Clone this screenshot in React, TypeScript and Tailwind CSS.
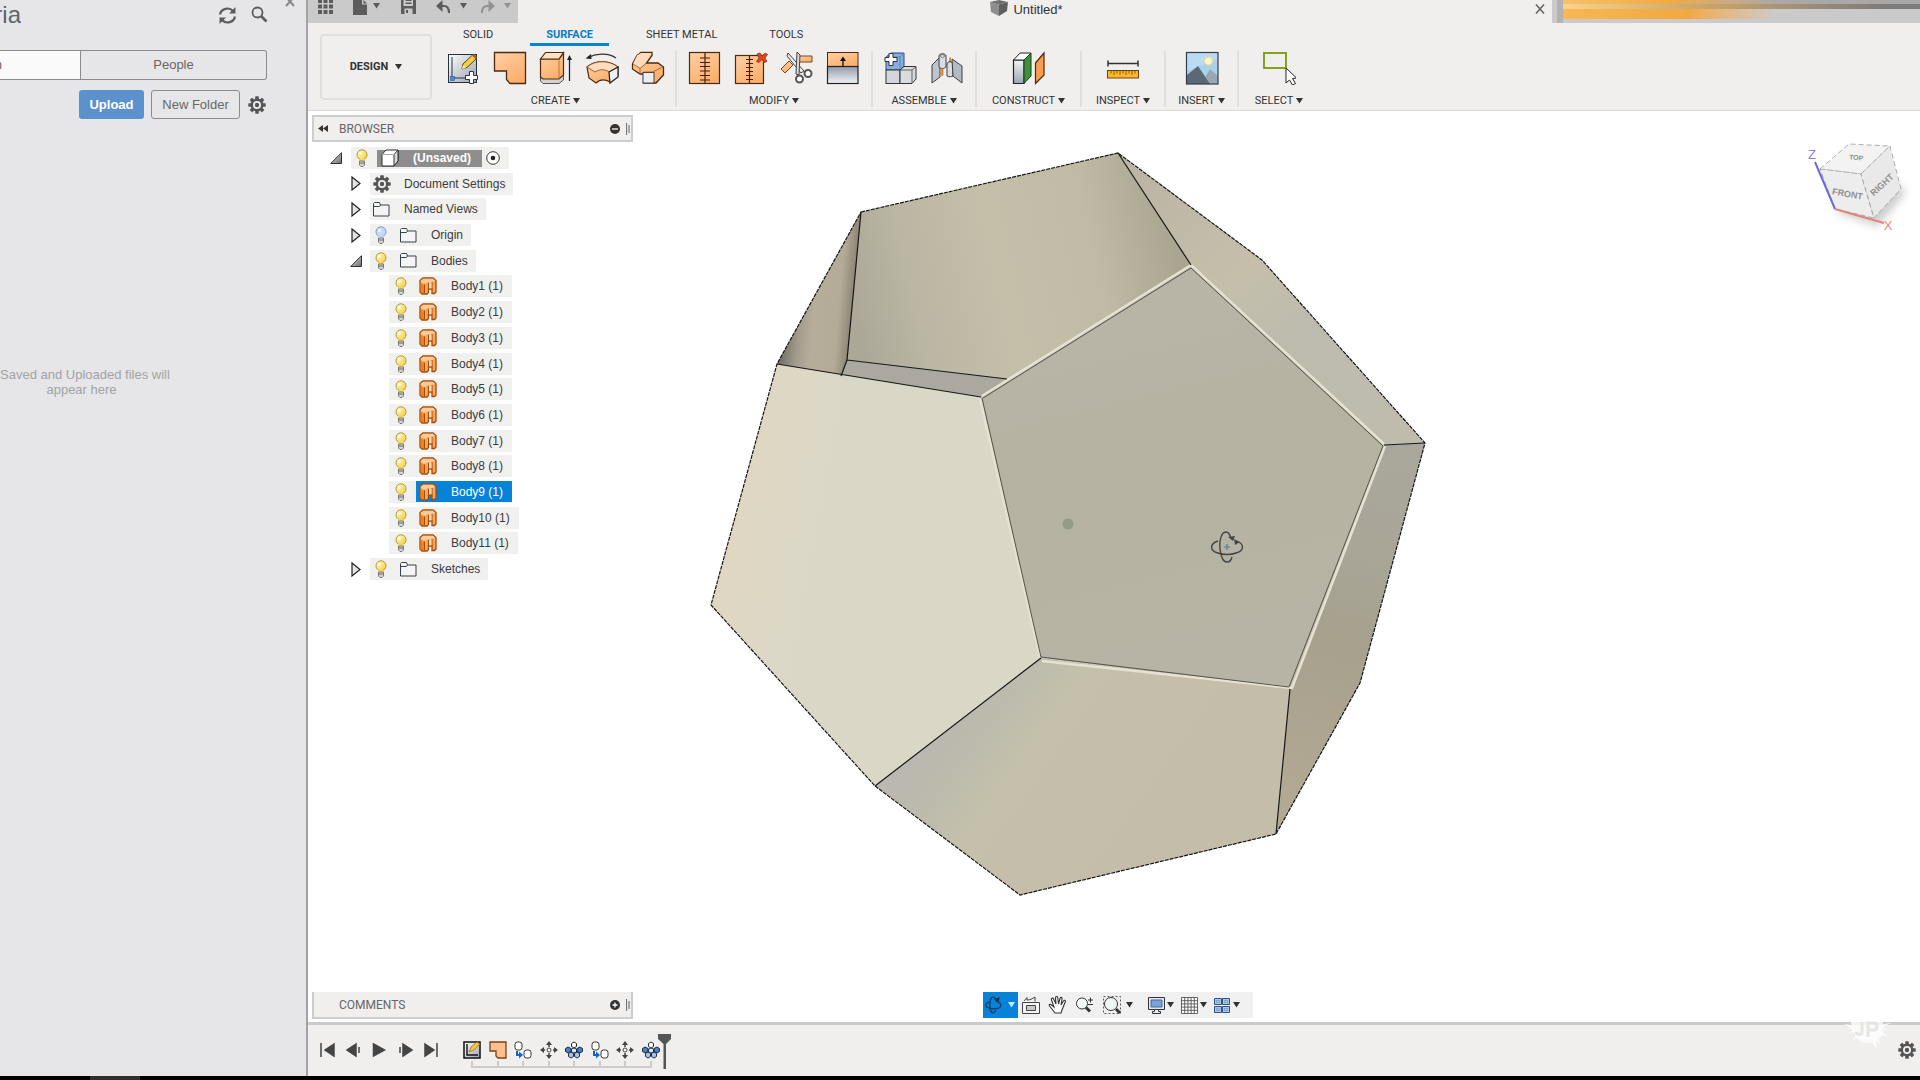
import React from "react";

type IconProps = { className?: string };

/* ---------- small shared pieces ---------- */

const Caret = ({ className = "text-[#333]" }: IconProps) => (
  <svg width="7" height="6" viewBox="0 0 7 6" className={"shrink-0 " + className} aria-hidden="true">
    <path d="M0 0h7L3.5 5.5z" fill="currentColor" />
  </svg>
);

const Gear = ({ className = "text-[#555]" }: IconProps) => (
  <svg width="18" height="18" viewBox="0 0 18 18" className={"shrink-0 " + className} aria-hidden="true">
    <g fill="currentColor">
      <rect x="7.2" y="0.3" width="3.6" height="17.4" rx="0.6" />
      <rect x="7.2" y="0.3" width="3.6" height="17.4" rx="0.6" transform="rotate(45 9 9)" />
      <rect x="7.2" y="0.3" width="3.6" height="17.4" rx="0.6" transform="rotate(90 9 9)" />
      <rect x="7.2" y="0.3" width="3.6" height="17.4" rx="0.6" transform="rotate(135 9 9)" />
      <circle cx="9" cy="9" r="6.4" />
    </g>
    <circle cx="9" cy="9" r="4" fill="#efefef" />
    <circle cx="9" cy="9" r="2.2" fill="currentColor" />
  </svg>
);

/* ---------- ribbon icons ---------- */

const svg32 = (children: React.ReactNode) => (
  <svg width="34" height="34" viewBox="0 0 34 34" className="-m-px" aria-hidden="true">
    {children}
  </svg>
);

const Defs = () => (
  <svg width="0" height="0" className="absolute" aria-hidden="true">
    <defs>
      <linearGradient id="or" x1="0" y1="0" x2="0.6" y2="1">
        <stop offset="0" stopColor="#ffd0a3" />
        <stop offset="1" stopColor="#fbaf6d" />
      </linearGradient>
      <linearGradient id="gr" x1="0" y1="0" x2="0" y2="1">
        <stop offset="0" stopColor="#f2f4f6" />
        <stop offset="1" stopColor="#9ba5b1" />
      </linearGradient>
      <linearGradient id="ex" x1="0" y1="0" x2="0" y2="1">
        <stop offset="0" stopColor="#8f9aa8" />
        <stop offset="1" stopColor="#f2f4f6" />
      </linearGradient>
      <linearGradient id="pg" x1="0" y1="0" x2="1" y2="1">
        <stop offset="0" stopColor="#fdfdfd" />
        <stop offset="1" stopColor="#97a3b3" />
      </linearGradient>
      <linearGradient id="bulb" x1="0" y1="0" x2="1" y2="1">
        <stop offset="0" stopColor="#fff9c8" />
        <stop offset="1" stopColor="#f5cf3c" />
      </linearGradient>
      <linearGradient id="tri" x1="0" y1="0" x2="1" y2="1">
        <stop offset="0" stopColor="#eee" />
        <stop offset="1" stopColor="#666" />
      </linearGradient>
    </defs>
  </svg>
);

const SketchIcon = () =>
  svg32(
    <>
      <rect x="1.5" y="3.5" width="28" height="28" fill="url(#pg)" stroke="#26313d" />
      <path d="M5 6v21h21" fill="none" stroke="#26313d" />
      <rect x="3.5" y="25.5" width="4" height="4" fill="#4a90d9" stroke="#235a94" strokeWidth="0.6" />
      <path d="M15 18l1-5L25.5 4l4 3.5-9.5 9z" fill="#f7cf45" stroke="#54420f" />
      <path d="M25 4.5l2-1.5 3 3-1.5 2z" fill="#b5581d" />
      <path d="M15 18l1-4 3 3z" fill="#fff1cf" />
      <path d="M22.500 20.500h4v4h4v4h-4v4h-4v-4h-4v-4h4z" fill="#fff" stroke="#333" />
    </>,
  );
const PatchIcon = () =>
  svg32(<path d="M1.500 1.500h31v31H17l-3.500-4V20h-12z" fill="url(#or)" stroke="#4b2a12" strokeWidth="1.3" />);
const ExtrudeIcon = () =>
  svg32(
    <>
      <path d="M1.500 26v4l2.500 2.500h16L24.500 29v-5z" fill="#cfd3d6" stroke="#555" />
      <path d="M1.500 8v18l2.500 2h16l4.500-4V2L20 8z" fill="url(#or)" stroke="#4b2a12" strokeWidth="1.2" />
      <path d="M1.500 8l5-6.500h18L20 8z" fill="#ffe0c2" stroke="#4b2a12" strokeWidth="1.2" />
      <path d="M20 8v20" stroke="#b2672c" strokeWidth="0.8" />
      <path d="M30.500 30V6" stroke="#222" strokeWidth="1.3" />
      <path d="M28 9l2.500-5L33 9z" fill="#222" />
    </>,
  );
const RevolveIcon = () =>
  svg32(
    <>
      <path d="M2 16c8-7 22-7 31 0v9l-8 6c-5-3-10-3-14 1l-7-5z" fill="url(#or)" stroke="#4b2a12" strokeWidth="1.2" />
      <path d="M2 16l8 5c5-3 10-3 14 0l9-5c-9-7-23-7-31 0z" fill="#ffdcbb" stroke="#7d4520" strokeWidth="0.8" />
      <path d="M24 21l9-5v10l-8 6z" fill="#edeff0" stroke="#222" strokeWidth="1.2" />
      <path d="M4 6C12 2 24 2 31 7" fill="none" stroke="#333" strokeWidth="1.3" />
      <path d="M0.500 7.500L6 3l.5 5z" fill="#222" />
    </>,
  );
const SweepIcon = () =>
  svg32(
    <>
      <path
        d="M6 4.500L10 1.500h11v3L15.500 12H27l5.500 4v8L25 32H12.500v-9H9l-7.500-5v-5z"
        fill="url(#or)"
        stroke="#4b2a12"
        strokeWidth="1.3"
      />
      <path d="M6 4.500L10 2h10.500L14 12l-5 5-7-4z" fill="#ffdcbb" />
      <path d="M2 13l7 4.500V23M9 17.500L15.500 12M12.500 21l9 0 10.500-5" fill="none" stroke="#a35f2c" strokeWidth="0.9" />
      <rect x="12" y="21.500" width="11" height="10.500" fill="#eceff1" stroke="#444" />
    </>,
  );
const StitchIcon = () =>
  svg32(
    <>
      <rect x="1.5" y="1.5" width="30" height="31" fill="url(#or)" stroke="#4b2a12" strokeWidth="1.2" />
      <path d="M17 2v30M12 7h10M12 11.500h10M12 15.500h10M12 20h10M12 24.500h10M12 29h10" stroke="#4b1d08" strokeWidth="1.2" />
    </>,
  );
const UnstitchIcon = () =>
  svg32(
    <>
      <rect x="1.5" y="4.5" width="28" height="28" fill="url(#or)" stroke="#4b2a12" strokeWidth="1.2" />
      <path
        d="M15.500 5v27M12 8.500h7M12 12.500h7M12 16.500h7M12 20.500h7M12 24.500h7M12 28.500h7"
        stroke="#4b1d08"
        strokeWidth="1.2"
      />
      <path d="M23 3l3-1 2 3 3-3 2.500 1.500L31 7l2 3.500-3 1-2-3-3 3-2.500-1L25 7z" fill="#e04321" stroke="#8e230c" strokeWidth="0.7" />
    </>,
  );
const TrimIcon = () =>
  svg32(
    <>
      <path d="M1 18l8-8 4 4-8 8z" fill="url(#or)" stroke="#7d4520" />
      <path d="M17 5h15v6H19z" fill="url(#or)" stroke="#7d4520" />
      <path d="M8 2l-1 3 14 17 3-2z" fill="#e9ebed" stroke="#444" />
      <path d="M17 1l3 3-1 20-3-1z" fill="#d7dadd" stroke="#444" />
      <circle cx="28" cy="22.500" r="3.5" fill="#fff" stroke="#555" strokeWidth="2" />
      <circle cx="19.500" cy="28" r="3.5" fill="#fff" stroke="#555" strokeWidth="2" />
    </>,
  );
const ExtendIcon = () =>
  svg32(
    <>
      <rect x="1.5" y="1.5" width="30.5" height="14" fill="url(#or)" stroke="#4b2a12" />
      <rect x="1.5" y="15.500" width="30.5" height="17" fill="url(#ex)" stroke="#222" strokeWidth="1.2" />
      <path d="M17 15V8" stroke="#111" strokeWidth="1.3" />
      <path d="M14 10l3-4.500 3 4.500z" fill="#111" />
    </>,
  );
const NewComponentIcon = () =>
  svg32(
    <>
      <path d="M2 6l5-4h13v13l-4 4H2z" fill="#86aee0" stroke="#2c4a73" />
      <path d="M2 6h14v13M16 6l4-4" fill="none" stroke="#5a83b8" />
      <rect x="2" y="19" width="14" height="13.5" fill="#d3d6da" stroke="#333" />
      <path d="M16 19l4-3.500h12V28l-4 4.500H16z" fill="#d9dbde" stroke="#333" />
      <path d="M16 19h12v13M28 19l4-3.500" fill="none" stroke="#555" strokeWidth="0.9" />
      <path d="M5 2.500h4v4h4v4H9v4H5v-4H1v-4h4z" fill="#fff" stroke="#333" />
    </>,
  );
const JointIcon = () =>
  svg32(
    <>
      <path d="M2 14l8-8v20l-8 6z" fill="#bfc4ca" stroke="#3a3f45" />
      <path d="M9 5c0-3 7-3 7 0v11c-2 2-5 2-7 0z" fill="#d9dce0" stroke="#3a3f45" />
      <ellipse cx="12.5" cy="5" rx="2" ry="1.3" fill="#fff" stroke="#3a3f45" strokeWidth="0.7" />
      <path d="M10.500 18h3v6l-1.500 1.500-1.500-1.500zM19 7l2-1v6h-2z" fill="#e88b3c" />
      <path d="M17 13c0-3 6-3 6 0v12c-2 1-4 1-6 0z" fill="#d9dce0" stroke="#3a3f45" />
      <path d="M22 8l10 7v17l-9-7z" fill="#b4bac1" stroke="#3a3f45" />
    </>,
  );
const ConstructIcon = () =>
  svg32(
    <>
      <path d="M1.500 9v23.500H12V9z" fill="url(#gr)" stroke="#222" strokeWidth="1.2" />
      <path d="M1.500 9L8 2h11l-7 7z" fill="#fafafa" stroke="#222" />
      <path d="M12 9l7-7v23l-7 7.500z" fill="#3f8f3b" stroke="#183f18" />
      <path d="M23.500 12L32 2v22l-8.500 8.500z" fill="#fb9d51" stroke="#51280b" strokeWidth="1.2" />
    </>,
  );
const InspectIcon = () =>
  svg32(
    <>
      <path d="M2 12.500h30M2 9.500v6M32 9.500v6" stroke="#333" strokeWidth="1.5" />
      <rect x="1.5" y="19.500" width="31" height="7.5" fill="#fdb92e" stroke="#6a4606" />
      <path
        d="M5 20v2.500M8 20v4M11 20v2.500M14 20v4M17 20v2.500M20 20v4M23 20v2.500M26 20v4M29 20v2.500"
        stroke="#6a4606"
        strokeWidth="0.8"
      />
    </>,
  );
const InsertIcon = () =>
  svg32(
    <>
      <rect x="1.5" y="1.5" width="31.5" height="31.5" fill="#a9d1ec" />
      <path d="M2 2h30v6L2 20z" fill="#c2e0f3" opacity="0.7" />
      <circle cx="23.5" cy="10" r="4" fill="#fdf6c9" stroke="#f0dc86" />
      <path d="M16 33l9-15 8 7v8z" fill="#9aa8b5" />
      <path d="M2 24l11-9 12 18H2z" fill="#5b6876" />
      <rect x="1.5" y="1.5" width="31.5" height="31.5" fill="none" stroke="#333c47" strokeWidth="1.2" />
    </>,
  );
const SelectIcon = () =>
  svg32(
    <>
      <rect x="2" y="2" width="22" height="15" fill="none" stroke="#86a11c" strokeWidth="2" />
      <path d="M24 17v15l3.500-3 3 5 3-1.500-3-5 4-.5z" fill="#fff" stroke="#222" />
    </>,
  );

type Group = { label: string; width: string; icons: { name: string; icon: React.ReactNode }[] };

const groups: Group[] = [
  {
    label: "CREATE",
    width: "w-[241px]",
    icons: [
      { name: "Create Sketch", icon: <SketchIcon /> },
      { name: "Patch", icon: <PatchIcon /> },
      { name: "Extrude", icon: <ExtrudeIcon /> },
      { name: "Revolve", icon: <RevolveIcon /> },
      { name: "Sweep", icon: <SweepIcon /> },
    ],
  },
  {
    label: "MODIFY",
    width: "w-[196px]",
    icons: [
      { name: "Stitch", icon: <StitchIcon /> },
      { name: "Unstitch", icon: <UnstitchIcon /> },
      { name: "Trim", icon: <TrimIcon /> },
      { name: "Extend", icon: <ExtendIcon /> },
    ],
  },
  {
    label: "ASSEMBLE",
    width: "w-[104px]",
    icons: [
      { name: "New Component", icon: <NewComponentIcon /> },
      { name: "Joint", icon: <JointIcon /> },
    ],
  },
  { label: "CONSTRUCT", width: "w-[105px]", icons: [{ name: "Construct", icon: <ConstructIcon /> }] },
  { label: "INSPECT", width: "w-[84px]", icons: [{ name: "Inspect", icon: <InspectIcon /> }] },
  { label: "INSERT", width: "w-[73px]", icons: [{ name: "Insert", icon: <InsertIcon /> }] },
  { label: "SELECT", width: "w-20", icons: [{ name: "Select", icon: <SelectIcon /> }] },
];

const tabs = ["SOLID", "SURFACE", "SHEET METAL", "TOOLS"];

/* ---------- data panel ---------- */

const DataPanel = () => (
  <aside className="flex w-[308px] shrink-0 flex-col overflow-hidden border-r-2 border-[#a3a3a5] bg-[#e6e6e8] text-[#666]">
    <header className="flex h-[30px] items-start">
      <div className="flex w-[21px] justify-end overflow-hidden">
        <h1 className="text-2xl leading-[30px] text-[#5f6468]">ria</h1>
      </div>
      <div className="ml-auto flex items-start">
        <button aria-label="Refresh" className="mt-[6px]">
          <svg width="19" height="19" viewBox="0 0 19 19" fill="none" stroke="#5c5c5c" strokeWidth="2.2">
            <path d="M2 8.500C3 2.500 11 .5 15 5M17 10.500c-1 6-9 8-13 3.500" />
            <path d="M17.500 1v6.500H11zM1.500 18v-6.500H8z" fill="#5c5c5c" stroke="none" />
          </svg>
        </button>
        <button aria-label="Search" className="mt-[6px] ml-[14px]">
          <svg width="17" height="17" viewBox="0 0 17 17" fill="none" stroke="#5c5c5c">
            <circle cx="6.5" cy="6.5" r="5" strokeWidth="1.8" />
            <path d="M10 10l5.500 5.500" strokeWidth="2.6" />
          </svg>
        </button>
        <button aria-label="Close panel" className="mr-[11px] ml-[17px]">
          <svg width="10" height="7" viewBox="0 0 10 7" stroke="#888" strokeWidth="2">
            <path d="M1-3l8 9M9-3L1 6" />
          </svg>
        </button>
      </div>
    </header>
    <div className="mt-5 mr-[39px] flex h-[30px] overflow-hidden rounded-r-[3px] border border-l-0 border-[#8b8b8b] text-[13px]">
      <button className="flex w-[81px] items-center border-r border-[#8b8b8b] bg-[#fafafa]">
        <span className="flex w-[2px] justify-end overflow-hidden">n</span>
      </button>
      <button className="flex-1">People</button>
    </div>
    <div className="mt-[10px] mr-10 flex items-center justify-end">
      <button className="h-[29px] w-[65px] rounded-[3px] bg-[#5b92cd] text-[13px] font-bold text-white">Upload</button>
      <button className="ml-[7px] h-[29px] w-[89px] rounded-[3px] border border-[#8b8b8b] text-[13px]">New Folder</button>
      <button aria-label="Settings" className="ml-2">
        <Gear />
      </button>
    </div>
    <p className="mt-[248px] mr-[143px] text-center text-[13px] leading-[15px] whitespace-nowrap text-[#a2a2a5]">
      Saved and Uploaded files will
      <br />
      appear here
    </p>
  </aside>
);

/* ---------- top bar and ribbon ---------- */

const TitleBar = () => (
  <div className="flex h-[23px]">
    <div className="flex w-[210px] shrink-0 items-start bg-[#cbcacb] pl-[10px] text-[#5c5c5c]">
      <button aria-label="Show data panel">
        <svg width="15" height="14" viewBox="0 0 15 14" fill="currentColor">
          <path d="M0 0h4v3H0zM5.500 0h4v3h-4zM11 0h4v3h-4zM0 4.500h4v4H0zM5.500 4.500h4v4h-4zM11 4.500h4v4h-4zM0 10h4v4H0zM5.500 10h4v4h-4zM11 10h4v4h-4z" />
        </svg>
      </button>
      <button aria-label="File" className="ml-5 flex gap-[5px]">
        <svg width="15" height="15" viewBox="0 0 15 15" fill="currentColor">
          <path d="M0 0h9v4.500h5V15H0zM10.500 0L14 3.500h-3.500z" />
        </svg>
        <Caret className="mt-[3px]" />
      </button>
      <button aria-label="Save" className="ml-[21px]">
        <svg width="15" height="14" viewBox="0 0 15 14" fill="currentColor">
          <path
            fillRule="evenodd"
            d="M0 0h2.500v6h9.500V0H15v14H0zM3.500 8.500V14h8V8.500zM4.500 0h6v1h-6zM4.500 2.500h6v1.500h-6zM5 10h2v3H5z"
          />
        </svg>
      </button>
      <button aria-label="Undo" className="ml-5 flex gap-[9px]">
        <svg width="15" height="14" viewBox="0 0 15 14">
          <path d="M3 6h5c4 0 5 3 5 7" fill="none" stroke="currentColor" strokeWidth="2.2" />
          <path d="M6.500 0v12L0 6z" fill="currentColor" />
        </svg>
        <Caret className="mt-[3px]" />
      </button>
      <button aria-label="Redo" className="ml-[13px] flex gap-[9px] text-[#919191]">
        <svg width="15" height="14" viewBox="0 0 15 14">
          <path d="M12 6H7c-4 0-5 3-5 7" fill="none" stroke="currentColor" strokeWidth="2" />
          <path d="M8.500 0v12L15 6z" fill="currentColor" />
        </svg>
        <Caret className="mt-[3px]" />
      </button>
    </div>
    <div className="flex flex-1 items-start pr-[7px]">
      <div className="flex flex-1 justify-center gap-[5px] text-[13px] leading-[19px] text-[#333]">
        <svg width="18" height="17" viewBox="0 0 18 17" aria-hidden="true">
          <path d="M0 2l9 2.500V16l-8-4z" fill="#8d8d8d" />
          <path d="M9 4.500L18 2l-1 9-8 5z" fill="#5f5f5f" />
          <path d="M0 2l9-2 9 2-9 2.500z" fill="#6f6f6f" />
        </svg>
        <span>Untitled*</span>
      </div>
      <button aria-label="Close document" className="mt-1">
        <svg width="10" height="10" viewBox="0 0 10 10" stroke="#666" strokeWidth="1.6">
          <path d="M1 0.500l8 9M9 0.500l-8 9" />
        </svg>
      </button>
    </div>
    <div className="flex w-[368px] shrink-0 items-start bg-[#cbcacb]">
      <div className="h-full w-[5px]" />
      <div className="h-full w-[6px] bg-[#b3b2b3]" />
      <div className="flex h-[19px] flex-1 flex-col">
        <div className="h-1 bg-linear-to-r from-[#f6c06a] via-[#f0aa3f] via-30% to-[#a9a8a7] to-60%" />
        <div className="h-[5px] bg-linear-to-r from-[#fad28c] via-[#c9a468] via-40% to-[#7c7c7c] to-90%" />
        <div className="h-[10px] bg-linear-to-r from-[#f7b753] via-[#f1a93f] via-35% to-[#cbcacb] to-60%" />
      </div>
    </div>
  </div>
);

const Ribbon = () => (
  <div className="flex h-[111px] shrink-0 flex-col border-b border-[#dad9d8] bg-[#f0efee]">
    <TitleBar />
    <div className="flex font-['Roboto','Liberation_Sans',sans-serif] text-[11px] text-[#333]">
      <button className="mt-[11px] ml-3 flex h-[66px] w-28 shrink-0 items-center justify-center gap-[7px] rounded border-2 border-[#e0dfde] font-bold">
        DESIGN
        <Caret />
      </button>
      <div className="ml-1 flex flex-col">
        <nav className="flex gap-[22px] pl-3" role="tablist">
          {tabs.map((t) => (
            <button
              key={t}
              role="tab"
              aria-selected={t === "SURFACE"}
              className={
                t === "SURFACE"
                  ? "h-[23px] border-b-3 border-[#0a84d0] px-4 pt-1 leading-4 font-bold text-[#0a7dc8]"
                  : "h-[23px] border-b-3 border-transparent px-[15px] pt-1 leading-4"
              }
            >
              {t}
            </button>
          ))}
        </nav>
        <div className="mt-[5px] flex">
          {groups.map((g) => (
            <section
              key={g.label}
              className={"flex h-14 flex-col items-center border-r-2 border-[#e0dfde] pt-px last:border-0 " + g.width}
            >
              <div className="flex gap-[14px]">
                {g.icons.map((i) => (
                  <button key={i.name} aria-label={i.name} className="size-8">
                    {i.icon}
                  </button>
                ))}
              </div>
              <button className="mt-[10px] flex items-center gap-[3px] leading-[14px]">
                {g.label}
                <Caret />
              </button>
            </section>
          ))}
        </div>
      </div>
    </div>
  </div>
);

/* ---------- browser tree ---------- */

const Bulb = ({ off = false }: { off?: boolean }) => (
  <svg width="12" height="18" viewBox="0 0 12 18" className="shrink-0" aria-hidden="true">
    <circle cx="6" cy="5.8" r="5" fill={off ? "#c5dafa" : "url(#bulb)"} stroke={off ? "#7f9cc9" : "#b9962b"} />
    <path d="M3.500 9.500h5v3h-5z" fill={off ? "#c5dafa" : "#f5d75a"} />
    <path d="M3.500 12h5v4l-1.500 1.500H5L3.500 16z" fill="#d4d4d4" stroke="#666" strokeWidth="0.8" />
    <path d="M3.500 14h5" stroke="#666" />
    <circle cx="4.5" cy="4.5" r="1.5" fill="#fff" opacity="0.8" />
  </svg>
);

const Folder = () => (
  <svg width="17" height="15" viewBox="0 0 17 15" className="shrink-0" fill="#f4f4f4" stroke="#39424a" aria-hidden="true">
    <path d="M.5 14V1.500L1.500.5h5L7.500 3H16v11z" />
    <path d="M.5 4.500h6L7.500 3" fill="none" />
  </svg>
);

const BodyIcon = () => (
  <svg width="18" height="18" viewBox="0 0 18 18" className="shrink-0" aria-hidden="true">
    <path
      d="M1 3.500L4 1h10l3 2.500V15l-1.500 1.500H13V12H9.500v3.500L8 17H3l-2-2z"
      fill="#f9a456"
      stroke="#a14e0a"
      strokeWidth="1.3"
    />
    <path d="M1.800 3.700L4.200 1.700h9.600l2.400 2L13 5H8.500L7 6.500H4L1.800 5z" fill="#ffcb9a" />
    <path d="M1.800 6L4 7.500h1.500v8.500H3.200L1.800 14.500z" fill="#f47f1c" />
    <path d="M5.500 7.500V16M9.500 6v6M13 5v7" stroke="#a14e0a" />
    <path d="M10 5.500h2.500v5.800H10z" fill="#ffd9b5" />
  </svg>
);

const CubeIcon = () => (
  <svg width="18" height="18" viewBox="0 0 18 18" className="shrink-0" stroke="#333" aria-hidden="true">
    <path d="M1 5.500l4-4.500h12v11l-4 5H1z" fill="#fff" />
    <path d="M13 5.500V17l4-5V1z" fill="#d8dadd" />
    <path d="M1 5.500h12" stroke="#aaa" />
  </svg>
);

const Twisty = ({ open, label }: { open: boolean; label: string }) => (
  <button aria-label={(open ? "Collapse " : "Expand ") + label} className="flex w-3 shrink-0 justify-center">
    {open ? (
      <svg width="12" height="12" viewBox="0 0 12 12">
        <path d="M11.500.7v10.800H.7z" fill="url(#tri)" stroke="#333" />
      </svg>
    ) : (
      <svg width="10" height="15" viewBox="0 0 10 15">
        <path d="M1 1l8 6.500L1 14z" fill="#e2e2e2" stroke="#222" strokeWidth="1.2" />
      </svg>
    )}
  </button>
);

type Branch = { label: string; open: boolean; icon: "gear" | "folder"; bulb?: "on" | "off" };

const BranchRow = ({ label, open, icon, bulb }: Branch) => (
  <li className="flex items-center pl-[38px]">
    <Twisty open={open} label={label} />
    <div className="ml-[8px] flex h-[22px] items-center bg-[#f0f0ef] pr-2">
      {bulb && (
        <span className="flex w-[27px] justify-center pr-[5px]">
          <Bulb off={bulb === "off"} />
        </span>
      )}
      <span className="flex w-[34px] items-center pl-[3px]">{icon === "gear" ? <Gear /> : <Folder />}</span>
      <span>{label}</span>
    </div>
  </li>
);

const BodyRow = ({ n }: { n: number }) => (
  <li className="flex items-center pl-[77px]">
    <div className="flex h-[22px] items-center bg-[#f0f0ef]">
      <span className="flex w-[27px] justify-center pr-1">
        <Bulb />
      </span>
      <span
        className={
          n === 9
            ? "flex h-[21px] items-center bg-[#0682d9] pr-[9px] pl-[3px] text-white"
            : "flex h-[21px] items-center pr-[9px] pl-[3px]"
        }
      >
        <BodyIcon />
        <span className="ml-[14px]">{`Body${n} (1)`}</span>
      </span>
    </div>
  </li>
);

const PanelHeader = ({ label, collapsed }: { label: string; collapsed: boolean }) => (
  <div
    className={
      collapsed
        ? "flex h-[27px] w-[321px] items-center border-2 border-t-0 border-[#cdcdcd] bg-[#f0efee] px-[6px] font-['Roboto','Liberation_Sans',sans-serif] text-xs text-[#666]"
        : "flex h-[27px] w-[321px] items-center border-2 border-[#cdcdcd] bg-[#f0efee] px-[6px] font-['Roboto','Liberation_Sans',sans-serif] text-xs text-[#666]"
    }
  >
    <span className="w-[19px]">
      {!collapsed && (
        <svg width="10" height="7" viewBox="0 0 10 7" className="-ml-[2px]" fill="#333" aria-hidden="true">
          <path d="M5 0v7L0 3.500zM10 0v7L5 3.500z" />
        </svg>
      )}
    </span>
    <h2>{label}</h2>
    <button aria-label={"Toggle " + label} className="mr-[6px] ml-auto">
      <svg width="10" height="10" viewBox="0 0 10 10">
        <circle cx="5" cy="5" r="5" fill="#333" />
        <path d={collapsed ? "M2.500 5h5M5 2.500v5" : "M2 5h6"} stroke="#fff" strokeWidth="1.3" />
      </svg>
    </button>
    <svg width="4" height="12" viewBox="0 0 4 12" className="-mr-[5px]" aria-hidden="true">
      <path d="M.5 0v12M3 2v8" stroke="#777" strokeWidth="1.2" />
    </svg>
  </div>
);

const BrowserTree = () => (
  <ul className="mt-[5px] flex h-[433px] flex-col justify-between text-xs text-[#3c3c3c]">
    <li className="flex items-center pl-[18px]">
      <Twisty open label="document" />
      <div className="ml-[9px] flex h-[22px] items-center bg-[#f0f0ef]">
        <span className="flex w-[26px] justify-center pr-1">
          <Bulb />
        </span>
        <span className="flex h-[17px] w-[105px] items-center bg-[#8d8d8d] pl-1 font-bold text-white">
          <CubeIcon />
          <span className="ml-[14px]">(Unsaved)</span>
        </span>
        <button aria-label="Activate" className="mr-[9px] ml-1">
          <svg width="14" height="14" viewBox="0 0 14 14">
            <circle cx="7" cy="7" r="6.3" fill="#fff" stroke="#333" />
            <circle cx="7" cy="7" r="2.3" fill="#222" />
          </svg>
        </button>
      </div>
    </li>
    <BranchRow label="Document Settings" open={false} icon="gear" />
    <BranchRow label="Named Views" open={false} icon="folder" />
    <BranchRow label="Origin" open={false} icon="folder" bulb="off" />
    <BranchRow label="Bodies" open icon="folder" bulb="on" />
    {[1, 2, 3, 4, 5, 6, 7, 8, 9, 10, 11].map((n) => (
      <BodyRow key={n} n={n} />
    ))}
    <BranchRow label="Sketches" open={false} icon="folder" bulb="on" />
  </ul>
);

/* ---------- 3D canvas ---------- */

const Model = () => (
  <svg viewBox="308 111 1612 911" className="absolute inset-0 h-full w-full" role="img" aria-label="Dodecahedron model">
    <defs>
      <linearGradient id="top" gradientUnits="userSpaceOnUse" x1="850" y1="290" x2="1170" y2="220">
        <stop offset="0" stopColor="#aca797" />
        <stop offset="0.18" stopColor="#bab6a3" />
        <stop offset="0.45" stopColor="#c3bfa9" />
        <stop offset="0.75" stopColor="#bfbba6" />
        <stop offset="1" stopColor="#a9a590" />
      </linearGradient>
      <linearGradient id="left" gradientUnits="userSpaceOnUse" x1="740" y1="500" x2="820" y2="515">
        <stop offset="0" stopColor="#dfd7c2" />
        <stop offset="1" stopColor="#dbd7c7" />
      </linearGradient>
      <linearGradient id="bottom" gradientUnits="userSpaceOnUse" x1="940" y1="720" x2="1120" y2="850">
        <stop offset="0" stopColor="#bab8b0" />
        <stop offset="0.2" stopColor="#bdbbad" />
        <stop offset="0.4" stopColor="#c4c0aa" />
        <stop offset="1" stopColor="#c4bdaa" />
      </linearGradient>
      <linearGradient id="right" gradientUnits="userSpaceOnUse" x1="1400" y1="450" x2="1310" y2="800">
        <stop offset="0" stopColor="#aaa79c" />
        <stop offset="0.3" stopColor="#a9a698" />
        <stop offset="0.55" stopColor="#a6a08d" />
        <stop offset="1" stopColor="#b2a993" />
      </linearGradient>
      <linearGradient id="tr" gradientUnits="userSpaceOnUse" x1="1150" y1="190" x2="1400" y2="440">
        <stop offset="0" stopColor="#bdb6a5" />
        <stop offset="0.35" stopColor="#c4bfab" />
        <stop offset="0.6" stopColor="#bdbbae" />
        <stop offset="1" stopColor="#bfbcae" />
      </linearGradient>
      <linearGradient id="inner" gradientUnits="userSpaceOnUse" x1="780" y1="342" x2="849" y2="348">
        <stop offset="0" stopColor="#6f6d68" />
        <stop offset="0.25" stopColor="#a29b8b" />
        <stop offset="0.45" stopColor="#b6ae9a" />
        <stop offset="0.8" stopColor="#b4ab97" />
        <stop offset="1" stopColor="#8d8575" />
      </linearGradient>
      <linearGradient id="front" gradientUnits="userSpaceOnUse" x1="1060" y1="350" x2="1140" y2="680">
        <stop offset="0" stopColor="#b8b4a6" />
        <stop offset="0.4" stopColor="#b6b2a1" />
        <stop offset="1" stopColor="#b8b4a5" />
      </linearGradient>
    </defs>
    <path d="M861 212L1118 153L1191 265L1007 379L847 360z" fill="url(#top)" />
    <path d="M861 212L847 360L841 376L777 364z" fill="url(#inner)" />
    <path d="M847 360L1007 379L981 397L841 376z" fill="#aca89f" />
    <path d="M1118 153L1262 260L1425 443L1384 445L1191 265z" fill="url(#tr)" />
    <path d="M1384 445L1425 443L1360 683L1276 834L1290 689z" fill="url(#right)" />
    <path d="M777 364L981 397L1041 658L875 786L711 605z" fill="url(#left)" />
    <path d="M1041 658L1290 689L1276 834L1020 895L875 786z" fill="url(#bottom)" />
    <path d="M981 397L1191 265L1384 445L1290 689L1041 658z" fill="url(#front)" />
    <path
      d="M982 396L1191 265L1384 444M1385 446L1292 688L1042 661M980 399L1040 657"
      fill="none"
      strokeWidth="2.5"
      stroke="#e6e1d1"
    />
    <path d="M983 398L1191 268L1383 446L1289 687L1041 657L982 398" fill="none" stroke="#55524a" />
    <g fill="none" stroke="#161616" strokeWidth="1.2">
      <path d="M861 212L847 360L841 376M847 360L1007 379M777 364L981 397M1118 153L1191 265M1384 445L1425 443M1041 658L875 786M1290 689L1276 834" />
      <path
        d="M861 212L1118 153L1262 260L1425 443L1360 683L1276 834L1020 895L875 786L711 605L777 364z"
        strokeDasharray="4 1"
      />
    </g>
    <circle cx="1068" cy="524" r="5.5" fill="#929b86" />
    <g transform="translate(1227 547)" fill="none" stroke="#444" strokeWidth="1.4">
      <path d="M-6 7C-9-4-6-15-1-15c3 0 4 3 5 6M5 10c-1 4-3 5-5 5-3 0-5-3-6-8" />
      <path d="M-9-6c-9 3-8 10 0 12 5 2 13 2 18 0 8-2 8-8 3-11" />
      <path d="M1-10l7-1-2 5zM7-8l1 6 5-3z" fill="#444" stroke="none" />
      <path d="M-3 0h6M0-3v6" stroke="#4c7ba5" strokeWidth="1.2" />
    </g>
  </svg>
);

const ViewCube = () => (
  <svg
    viewBox="1800 130 120 110"
    width="120"
    height="110"
    className="absolute top-[19px] right-0"
    role="img"
    aria-label="View cube"
  >
    <defs>
      <filter id="soft" x="-30%" y="-80%" width="160%" height="260%">
        <feGaussianBlur stdDeviation="4" />
      </filter>
    </defs>
    <path d="M1835 212L1878 226L1906 192L1890 180z" fill="#aaa" opacity="0.6" filter="url(#soft)" />
    <g fill="#ededed" stroke="#9b9b9b" strokeWidth="0.8" strokeDasharray="5 3">
      <path d="M1820 169L1849 144L1890 146L1861 174z" fill="#f3f3f3" />
      <path d="M1820 169L1861 174L1874 218L1835 209z" />
      <path d="M1861 174L1890 146L1901 189L1874 218z" fill="#e9e9e9" />
    </g>
    <g className="font-['Liberation_Sans',sans-serif]" fill="#8f8f8f" fontWeight="bold" textAnchor="middle">
      <text x="1856" y="160" fontSize="7" transform="rotate(4 1856 160)">TOP</text>
      <text x="1847" y="197" fontSize="9" transform="rotate(10 1847 197)">FRONT</text>
      <text x="1884" y="187" fontSize="9" transform="rotate(-43 1884 187)">RIGHT</text>
    </g>
    <path d="M1815 162L1835 209" stroke="#6f68dd" strokeWidth="2" />
    <path d="M1835 209L1884 223" stroke="#e2837c" strokeWidth="2" />
    <g className="font-['Liberation_Sans',sans-serif]" fontSize="13" textAnchor="middle">
      <text x="1812" y="159" fill="#8480e6">Z</text>
      <text x="1888" y="230" fill="#ea8c85">X</text>
    </g>
  </svg>
);

/* ---------- navigation bar ---------- */

const NavBar = () => (
  <div className="flex h-[26px] w-[270px] items-center bg-[#f0f0f0]">
    <button aria-label="Orbit" className="flex h-full w-[35px] items-center justify-end gap-[6px] bg-[#0682d9] pr-[3px]">
      <svg width="17" height="18" viewBox="0 0 17 18" fill="none" stroke="#12395c" strokeWidth="1.2">
        <path d="M5 13C4 5 6 1 8 1s3 3 4 5M11 14c-1 2-2 3-3 3s-2-1-3-4" />
        <path d="M4 6c-5 2-4 5 0 6 3 1 7 1 10 0 3-2 2-5-1-6" />
        <path d="M10 3l4-1-1 4z" fill="#12395c" />
      </svg>
      <Caret className="text-[#bfe9ff]" />
    </button>
    <button aria-label="Look At" className="ml-1">
      <svg width="18" height="18" viewBox="0 0 18 18" fill="#f5f5f5" stroke="#444">
        <path d="M.5 6.500h17v11H.5z" />
        <path d="M4.500 9.500h9v5h-9z" fill="#c9c9c9" />
        <path d="M2 5L5 1.500V4c3 0 5-1 8-3v4.500" fill="none" />
      </svg>
    </button>
    <button aria-label="Pan" className="ml-2">
      <svg width="19" height="18" viewBox="0 0 19 18" fill="#fff" stroke="#333" strokeWidth="1.1">
        <path d="M7 17L2 10.500C0 8.500 2 7.500 3.500 9L6 11 3.500 4c-.5-2 1.500-2.500 2.200-.7L8 8 7.500 2c0-2 2-2 2.300 0L10.500 8 12 2.500c.5-1.800 2.300-1.300 2 .5L13 9l2.500-4c1-1.500 2.500-.5 1.700 1L14 14l-1 3z" />
      </svg>
    </button>
    <button aria-label="Zoom" className="ml-2">
      <svg width="19" height="18" viewBox="0 0 19 18" fill="none" stroke="#333">
        <circle cx="7" cy="7.5" r="5.5" fill="#f6f9f9" />
        <path d="M11 11.500l4 4" strokeWidth="3" />
        <path d="M13 4h5M15.500 1.500v5M13 8.500h5" />
      </svg>
    </button>
    <button aria-label="Fit" className="ml-[9px] flex items-center gap-1">
      <svg width="19" height="18" viewBox="0 0 19 18" fill="none" stroke="#333">
        <path d="M.5.500h17v17H.5z" strokeDasharray="2 2" strokeWidth="0.8" />
        <circle cx="8" cy="8" r="6.5" fill="#eef4f2" />
        <path d="M13 13l4 4" strokeWidth="3" />
      </svg>
      <Caret />
    </button>
    <button aria-label="Display Settings" className="ml-[15px] flex items-center gap-[2px]">
      <svg width="17" height="17" viewBox="0 0 17 17" stroke="#333">
        <path d="M.5.500h16v12H.5z" fill="#dfe8f3" />
        <path d="M3 3h11v7H3z" fill="#7ba3d6" stroke="#476a9c" />
        <path d="M6.500 12.500h4v2h2v2h-8v-2h2z" fill="#eee" />
      </svg>
      <Caret />
    </button>
    <button aria-label="Grid and Snaps" className="ml-[7px] flex items-center gap-[2px]">
      <svg width="17" height="17" viewBox="0 0 17 17" fill="#fff" stroke="#555" strokeWidth="0.9">
        <path d="M.5.500h16v16H.5zM3.700.500v16M6.900.500v16M10.100.500v16M13.300.500v16M.5 3.700h16M.5 6.900h16M.5 10.100h16M.5 13.300h16" />
      </svg>
      <Caret />
    </button>
    <button aria-label="Viewports" className="ml-[7px] flex items-center gap-[3px]">
      <svg width="16" height="15" viewBox="0 0 16 15" fill="#a9c8ec" stroke="#34537c">
        <path d="M.5.500h7v6h-7zM8.500.500h7v6h-7zM.5 8.500h7v6h-7zM8.500 8.500h7v6h-7z" />
        <path
          d="M2.500 2.500h3v2h-3zM10.500 2.500h3v2h-3zM2.500 10.500h3v2h-3zM10.500 10.500h3v2h-3z"
          stroke="#6f96c5"
          strokeWidth="0.7"
        />
      </svg>
      <Caret />
    </button>
  </div>
);

/* ---------- timeline ---------- */

const playback = [
  { name: "Go to start", d: "M1 1v14M14 2L5 8l9 6z" },
  { name: "Step back", d: "M10 2L1 8l9 6zM13 5v6" },
  { name: "Play", d: "M1.500 2l11 6-11 6z" },
  { name: "Step forward", d: "M5 2l9 6-9 6zM2 5v6" },
  { name: "Go to end", d: "M1 2l9 6-9 6zM13 1v14" },
];

const feature = (children: React.ReactNode) => (
  <svg width="18" height="18" viewBox="0 0 18 18" aria-hidden="true">
    {children}
  </svg>
);

const TlSketch = () =>
  feature(
    <>
      <rect x="1" y="1" width="16" height="16" fill="url(#pg)" stroke="#111" strokeWidth="1.5" />
      <path d="M4 3v11h11" fill="none" stroke="#111" strokeWidth="1.4" />
      <path d="M6 11l2-5 6-5 3 2-6 6z" fill="#fbc22f" stroke="#8a5d08" strokeWidth="0.6" />
    </>,
  );
const TlPatch = () =>
  feature(<path d="M1 1h16v16H9l-2-2v-5H1z" fill="#fdbf8d" stroke="#7a4319" strokeWidth="1.3" />);
const TlCopy = () =>
  feature(
    <>
      <rect x="1" y="1" width="7" height="8" rx="2.5" fill="#fff" stroke="#333" />
      <rect x="10" y="9" width="7" height="8" rx="2.5" fill="#fff" stroke="#333" />
      <path d="M3 10v4h3" fill="none" stroke="#1467b8" strokeWidth="2" />
      <path d="M5 10.500l4 3.500-4 3.500z" fill="#1467b8" />
    </>,
  );
const TlMove = () =>
  feature(
    <>
      <path d="M9 0l3 4H6zM9 18l3-4H6zM0 9l4-3v6zM18 9l-4-3v6z" fill="#444" />
      <path d="M9 3v3M9 12v3M3 9h2M13 9h2" stroke="#444" strokeWidth="1.5" />
      <circle cx="9" cy="9" r="2" fill="#fff" stroke="#444" />
    </>,
  );
const TlPattern = () =>
  feature(
    <g stroke="#1b2c44">
      <path d="M6.500 2.500L9 1l2.500 1.500v3L9 7 6.500 5.500z" fill="#fff" />
      <path d="M.5 7.500L3 6l3 1.500v3L3 12 .5 10.500zM12 7.500L15 6l2.500 1.500v3L15 12l-3-1.500z" fill="#4c7fc0" />
      <path d="M6.500 8L9 7l2.500 1v3L9 12l-2.500-1z" fill="#dbe8f7" />
      <path d="M3.500 12.500l2.500-1.500 2.500 1.500v3L6 17l-2.500-1.500zM9.500 12.500L12 11l2.500 1.500v3L12 17l-2.500-1.500z" fill="#a8c4e6" />
    </g>,
  );

const features = [
  { name: "Sketch1", icon: <TlSketch /> },
  { name: "Patch1", icon: <TlPatch /> },
  { name: "CopyPasteBodies1", icon: <TlCopy /> },
  { name: "Move1", icon: <TlMove /> },
  { name: "Pattern1", icon: <TlPattern /> },
  { name: "CopyPasteBodies2", icon: <TlCopy /> },
  { name: "Move2", icon: <TlMove /> },
  { name: "Pattern2", icon: <TlPattern /> },
];

const Timeline = () => (
  <footer className="relative flex h-[54px] shrink-0 items-start border-t-3 border-[#cbcacb] bg-[#f0efee]">
    <div className="mt-[17px] flex gap-[11px] pl-[12px]">
      {playback.map((p) => (
        <button key={p.name} aria-label={p.name}>
          <svg width="15" height="16" viewBox="0 0 15 16">
            <path d={p.d} fill="#444" stroke="#444" strokeWidth="1.5" />
          </svg>
        </button>
      ))}
    </div>
    <div className="mt-4 ml-6 w-[197px]">
      <div className="flex justify-between">
        {features.map((f) => (
          <button key={f.name} aria-label={f.name}>
            {f.icon}
          </button>
        ))}
      </div>
      <div className="mx-2 mt-[2px] flex h-[7px] justify-between border-b-2 border-[#cbcbcc]">
        {features.map((f) => (
          <span key={f.name} className="w-[2px] bg-[#cbcbcc]" />
        ))}
      </div>
    </div>
    <svg
      width="13"
      height="35"
      viewBox="0 0 13 35"
      className="absolute top-[9px] left-[350px]"
      role="img"
      aria-label="Timeline marker"
    >
      <path d="M0 0h13v5L8 10v25H5.500V10L0 5z" fill="#555" />
    </svg>
    <button aria-label="Timeline settings" className="mt-4 mr-1 ml-auto">
      <Gear />
    </button>
    <svg width="50" height="34" viewBox="0 0 50 34" className="absolute -top-1 right-[28px]" role="img" aria-label="Watermark">
      <path
        d="M2 3l7 1V0h32v3l8-1-8 4 5 3-6-1 1 4 7 4-8-2-4 5 3 4-5-3 1 9-5-8c-6 2-12 0-15-4l-5 3 4-6-3-3-6 2 6-4z"
        fill="#fff"
        opacity="0.75"
      />
      <path d="M20 1v10c0 3-5 3-6 0M26 16V2h6c4 0 4 7 0 7h-5" fill="none" stroke="#e6e5e4" strokeWidth="3" />
    </svg>
  </footer>
);

/* ---------- page ---------- */

export default function App() {
  return (
    <div className="flex h-screen flex-col overflow-hidden bg-white font-['Liberation_Sans',Arial,sans-serif]">
      <Defs />
      <div className="flex min-h-0 flex-1">
        <DataPanel />
        <div className="flex min-w-0 flex-1 flex-col">
          <Ribbon />
          <main className="relative flex min-h-0 flex-1 flex-col">
            <Model />
            <ViewCube />
            <div className="relative pt-1 pl-1">
              <PanelHeader label="BROWSER" collapsed={false} />
              <BrowserTree />
            </div>
            <div className="relative mt-auto mb-[3px] flex pl-1">
              <PanelHeader label="COMMENTS" collapsed />
              <div className="ml-[350px] flex">
                <NavBar />
              </div>
            </div>
          </main>
          <Timeline />
        </div>
      </div>
      <div className="flex h-1 shrink-0 bg-black pl-[90px]">
        <div className="w-[50px] bg-[#2e2e2e]" />
      </div>
    </div>
  );
}
